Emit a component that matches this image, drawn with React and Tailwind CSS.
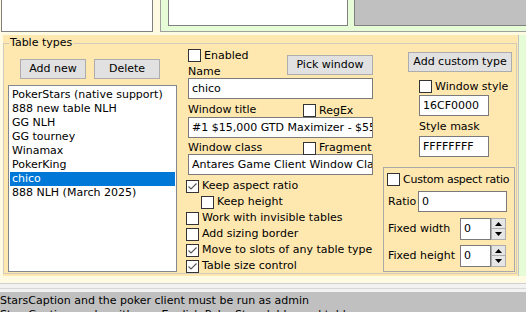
import React from "react";

const items = [
  "PokerStars (native support)",
  "888 new table NLH",
  "GG NLH",
  "GG tourney",
  "Winamax",
  "PokerKing",
  "chico",
  "888 NLH (March 2025)",
];

const Box = ({ checked }) => (
  <span className="w-[13px] h-[13px] shrink-0 border border-[#333333] bg-white flex items-center justify-center">
    {checked && (
      <svg width="11" height="11" viewBox="0 0 11 11">
        <path d="M1.5 5.5 L4 8 L9.5 2.5" fill="none" stroke="#5a5a5a" strokeWidth="1.2" />
      </svg>
    )}
  </span>
);

const Check = ({ label, checked, className = "", textClass = "" }) => (
  <div className={`flex items-center gap-[3px] whitespace-nowrap ${className}`}>
    <Box checked={checked} />
    <span className={textClass}>{label}</span>
  </div>
);

const Button = ({ children, className = "" }) => (
  <div
    className={`h-[20px] flex items-center justify-center bg-[#e1e1e1] border border-[#adadad] whitespace-nowrap ${className}`}
  >
    {children}
  </div>
);

const Field = ({ value, className = "" }) => (
  <div
    className={`h-[21px] flex items-center bg-white border border-[#7a7a7a] pl-[3px] overflow-hidden whitespace-nowrap ${className}`}
  >
    {value}
  </div>
);

const Spin = () => (
  <div className="w-[15px] h-[22px] flex flex-col">
    <div className="h-[11px] bg-[#e6e6e6] border border-[#adadad] flex items-center justify-center">
      <svg width="7" height="4" viewBox="0 0 7 4">
        <path d="M3.5 0 L7 4 L0 4 Z" fill="#000" />
      </svg>
    </div>
    <div className="h-[11px] bg-[#e6e6e6] border border-t-0 border-[#adadad] flex items-center justify-center">
      <svg width="7" height="4" viewBox="0 0 7 4">
        <path d="M0 0 L7 0 L3.5 4 Z" fill="#000" />
      </svg>
    </div>
  </div>
);

export default function App() {
  return (
    <div className="w-[526px] h-[312px] overflow-hidden bg-[#fffbe3] text-black text-[11px] leading-[14px] font-['DejaVu_Sans',sans-serif]">
      {/* Top panes */}
      <div className="flex h-[32px]">
        <div className="ml-[1px] w-[152px] h-[32px] bg-white border border-t-0 border-[#808080]" />
        <div className="ml-[7px] flex-1 h-[32px] flex gap-[6px] pl-[7px] bg-[#e6fcd6] border-l border-b border-[#a0a0a0]">
          <div className="w-[180px] h-[26px] bg-white border border-t-0 border-[#808080]" />
          <div className="flex-1 h-[26px] bg-[#c0c0c0] border-l border-b border-[#808080]" />
        </div>
      </div>

      {/* Main */}
      <div className="mt-[3px] flex h-[241px]">
        <div className="ml-[3px] w-[515px] bg-[#ffe8b0] pt-[8px]">
          <div className="relative w-[514px] h-[231px] border border-[#d2ccbe] flex">
            <span className="absolute left-[5px] top-[-8px] px-[1px] bg-[#ffe8b0]">Table types</span>

            {/* Left column */}
            <div className="ml-[4px] w-[169px] pt-[15px]">
              <div className="flex gap-[8px] pl-[12px]">
                <Button className="w-[66px]">Add new</Button>
                <Button className="w-[66px]">Delete</Button>
              </div>
              <div className="mt-[6px] h-[187px] bg-white border border-[#828790] pt-[2px] px-[1px]">
                {items.map((it) => (
                  <div
                    key={it}
                    className={`h-[14px] pl-[2px] whitespace-nowrap ${
                      it === "chico" ? "bg-[#0078d7] text-white" : ""
                    }`}
                  >
                    {it}
                  </div>
                ))}
              </div>
            </div>

            {/* Middle column */}
            <div className="ml-[8px] w-[188px] pt-[5px]">
              <div className="ml-[3px] w-[185px] flex justify-between">
                <div>
                  <Check label="Enabled" className="h-[13px]" />
                  <div className="mt-[3px] h-[13px]">Name</div>
                </div>
                <Button className="mt-[6px] w-[86px]">Pick window</Button>
              </div>
              <Field value="chico" className="ml-[3px] w-[185px]" />
              <div className="ml-[3px] h-[18px] flex">
                <span className="w-[115px] pt-[4px]">Window title</span>
                <Check label="RegEx" className="pt-[5px] h-[18px]" />
              </div>
              <Field value="#1 $15,000 GTD Maximizer - $55" className="ml-[3px] w-[185px]" />
              <div className="ml-[3px] h-[16px] flex">
                <span className="w-[115px] pt-[3px]">Window class</span>
                <Check label="Fragment" className="pt-[4px] h-[16px]" />
              </div>
              <Field value="Antares Game Client Window Class" className="ml-[3px] w-[185px]" />
              <div className="mt-[3px] pl-[1px]">
                <Check label="Keep aspect ratio" checked className="h-[16px]" />
                <Check label="Keep height" className="h-[16px] pl-[15px]" />
                <Check label="Work with invisible tables" className="h-[16px]" />
                <Check label="Add sizing border" className="h-[16px]" />
                <Check label="Move to slots of any table type" checked className="h-[16px]" />
                <Check label="Table size control" checked className="h-[16px]" />
              </div>
            </div>

            {/* Right column */}
            <div className="ml-[10px] w-[132px] pt-[8px]">
              <Button className="ml-[25px] w-[104px]">Add custom type</Button>
              <div className="ml-[36px] mt-[8px]">
                <Check label="Window style" className="h-[13px]" />
                <Field value="16CF0000" className="mt-[2px] w-[70px]" />
                <div className="mt-[4px] h-[14px]">Style mask</div>
                <Field value="FFFFFFFF" className="mt-[2px] w-[70px]" />
              </div>
              <div className="mt-[10px] h-[105px] border border-[#a8a8a8] pl-[3px] pt-[5px]">
                <Check label="Custom aspect ratio" className="h-[13px]" textClass="tracking-[-0.25px]" />
                <div className="mt-[5px] flex items-center pl-[1px]">
                  <span className="w-[30px]">Ratio</span>
                  <Field value="0" className="w-[89px]" />
                </div>
                <div className="mt-[6px] flex items-center pl-[1px]">
                  <span className="w-[72px]">Fixed width</span>
                  <Field value="0" className="w-[31px] h-[22px]" />
                  <Spin />
                </div>
                <div className="mt-[5px] flex items-center pl-[1px]">
                  <span className="w-[72px]">Fixed height</span>
                  <Field value="0" className="w-[31px] h-[22px]" />
                  <Spin />
                </div>
              </div>
            </div>
          </div>
        </div>
        <div className="w-px bg-[#c4c4c4]" />
        <div className="flex-1 bg-[#e6fcd6]" />
      </div>

      {/* Status */}
      <div className="mt-[7px] h-[9px] border-t border-[#d0d0d0] bg-[#f2f2f2]">
        <div className="mt-[4px] h-px bg-[#d8d8d8]" />
      </div>
      <div className="h-[20px] bg-[#c0c0c0] pt-[2px] whitespace-nowrap">
        <div>StarsCaption and the poker client must be run as admin</div>
        <div>StarsCaption works with non-English PokerStars lobby and tables</div>
      </div>
    </div>
  );
}
